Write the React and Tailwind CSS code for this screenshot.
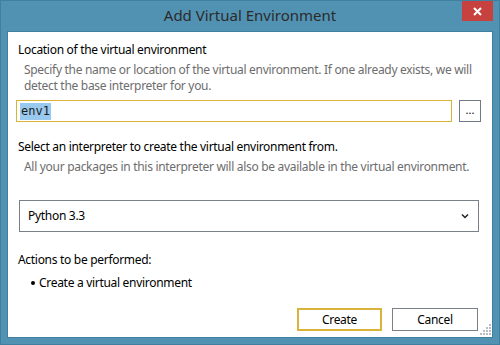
import React from "react";

const font = { fontFamily: '"Noto Sans", "Open Sans", sans-serif' };

const App = () => {
  return (
    <div
      className="w-[500px] h-[345px] bg-[#5192b3] border border-[#3f7fa0] flex flex-col text-[12px] text-black overflow-hidden"
      style={font}
    >
      {/* title bar */}
      <div className="relative h-[30px] flex items-center justify-center shrink-0">
        <span className="text-[15px] text-[#2b2b2b] leading-none -mt-[1px]">Add Virtual Environment</span>
        <div className="absolute right-[6px] top-0 w-[31px] h-[20px] bg-[#c7413f] flex items-center justify-center">
          <svg width="9" height="9" viewBox="0 0 9 9">
            <path d="M1 1 L8 8 M8 1 L1 8" stroke="#fff" strokeWidth="2" />
          </svg>
        </div>
      </div>

      {/* client area */}
      <div className="flex-1 min-h-0 mx-[6px] mb-[6px] bg-white border border-[#3f7fa0] flex flex-col pl-[8px] pr-[9px] pt-[10px] tracking-[-0.3px]">
        <div className="pl-[2px] leading-[16px]">Location of the virtual environment</div>
        <div className="mt-[4px] pl-[8px] leading-[16px] text-[#6d6d6d]">
          <div>Specify the name or location of the virtual environment. If one already exists, we will</div>
          <div>detect the base interpreter for you.</div>
        </div>

        <div className="mt-[6px] flex items-center gap-[7px]">
          <div className="w-[436px] h-[22px] border border-[#dab33b] flex items-center px-[3px]">
            <span
              className="bg-[#99c9ef] px-[1px] leading-[17px] text-[12px] text-[#1b1b1b] tracking-normal"
              style={{ fontFamily: '"DejaVu Sans Mono", monospace' }}
            >
              env1
            </span>
          </div>
          <div className="w-[22px] h-[22px] border border-[#707a86] flex items-center justify-center text-[11px] leading-none pb-[3px] tracking-normal">
            ...
          </div>
        </div>

        <div className="mt-[17px] pl-[2px] leading-[16px]">Select an interpreter to create the virtual environment from.</div>
        <div className="mt-[4px] pl-[8px] leading-[15px] text-[#6d6d6d] whitespace-nowrap">
          All your packages in this interpreter will also be available in the virtual environment.
        </div>

        <div className="mt-[26px] ml-[3px] w-[460px] h-[32px] border border-[#7a8088] flex items-center justify-between pl-[8px] pr-[9px]">
          <span>Python 3.3</span>
          <svg width="8" height="6" viewBox="0 0 8 6">
            <path d="M1 1.5 L4 4.5 L7 1.5" stroke="#222" strokeWidth="1.5" fill="none" />
          </svg>
        </div>

        <div className="mt-[20px] pl-[2px] leading-[16px]">Actions to be performed:</div>
        <div className="mt-[7px] pl-[15px] leading-[16px] flex items-center gap-[4px]">
          <span className="w-[4px] h-[4px] rounded-full bg-black" />
          <span>Create a virtual environment</span>
        </div>

        <div className="mt-[17px] flex justify-end gap-[10px] pr-[5px] relative">
          <button className="w-[85px] h-[23px] border-2 border-[#dab33b] bg-white leading-none">Create</button>
          <button className="w-[86px] h-[23px] border border-[#7a8088] bg-white leading-none">Cancel</button>
          <svg className="absolute right-[-8px] top-[16px]" width="11" height="11" viewBox="0 0 11 11">
            {[
              [9, 1], [6, 4], [9, 4], [3, 7], [6, 7], [9, 7], [0, 10], [3, 10], [6, 10], [9, 10],
            ].map(([x, y], i) => (
              <rect key={i} x={x} y={y - 1} width="2" height="2" fill="#b8bcc8" />
            ))}
          </svg>
        </div>
      </div>
    </div>
  );
};

export default App;
